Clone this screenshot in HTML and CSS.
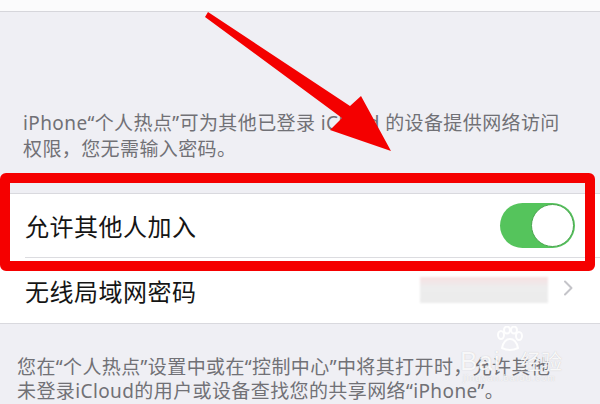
FILE: index.html
```html
<!DOCTYPE html>
<html lang="zh-CN">
<head>
  <meta charset="UTF-8" />
  <meta name="viewport" content="width=device-width, initial-scale=1.0">
  <title>个人热点</title>
  <link rel="stylesheet" href="styles.css">
</head>
<body>
  <div class="screen">
    <div class="top-bar"></div>

    <p class="note top-note">iPhone“个人热点”可为其他已登录 iCloud 的设备提供网络访问<br>权限，您无需输入密码。</p>

    <div class="group">
      <div class="cell">
        <span class="cell-label">允许其他人加入</span>
        <span class="switch on"><span class="knob"></span></span>
      </div>
      <div class="cell">
        <span class="cell-label">无线局域网密码</span>
        <span class="cell-value">
          <span class="blurred"></span>
          <svg class="chevron" width="10" height="16" viewBox="0 0 10 16">
            <path d="M2 1.5 L8.5 8 L2 14.5" fill="none" stroke="#c4c4c9" stroke-width="2" stroke-linecap="round" stroke-linejoin="round"/>
          </svg>
        </span>
      </div>
    </div>

    <p class="note bottom-note">您在“个人热点”设置中或在“控制中心”中将其打开时，允许其他<br>未登录iCloud的用户或设备查找您的共享网络“iPhone”。</p>

    <!-- annotations drawn over the screenshot -->
    <div class="highlight-box"></div>
    <svg class="arrow" width="600" height="404" viewBox="0 0 600 404">
      <polygon points="208,12 350,106 361,96 391,151 330,130 342,118 205,17" fill="#f40000"/>
    </svg>
    <div class="watermark">
      <svg class="wm-paw" width="30" height="26" viewBox="0 0 30 26">
        <g fill="none" stroke="rgba(255,255,255,0.9)" stroke-width="2">
          <ellipse cx="7" cy="9" rx="3" ry="4"/>
          <ellipse cx="13" cy="4" rx="3" ry="3.5"/>
          <ellipse cx="20" cy="4" rx="3" ry="3.5"/>
          <ellipse cx="25" cy="10" rx="3" ry="4"/>
          <path d="M8 22 Q10 13 16 13 Q22 13 24 22 Q16 26 8 22 Z"/>
        </g>
      </svg>
      <span class="wm-bai">Bai</span><span class="wm-jy">经验</span>
      <span class="wm-url">jingyan.baidu.com</span>
    </div>
  </div>
</body>
</html>
```

FILE: styles.css
```css
body {
  margin: 0;
  padding: 0;
  font-family: "Noto Sans", "Noto Sans CJK SC", sans-serif;
  background-color: #efeff4;
}

.screen {
  position: relative;
  width: 600px;
  height: 404px;
  overflow: hidden;
  background-color: #efeff4;
}

.top-bar {
  height: 11px;
  background-color: #fbfbfc;
  border-bottom: 1px solid #d6d6db;
}

.note {
  margin: 0;
  font-size: 19px;
  color: #717176;
  white-space: nowrap;
  letter-spacing: 0.4px;
}

.top-note {
  padding: 98px 23px 31px;
  line-height: 26px;
}

.bottom-note {
  padding: 31px 17px 0;
  line-height: 24px;
}

.group {
  background-color: #fff;
  border-top: 1px solid #d9d9de;
  border-bottom: 1px solid #d9d9de;
}

.cell {
  display: flex;
  align-items: center;
  justify-content: space-between;
  height: 63px;
  margin-left: 25px;
  padding-right: 25px;
  border-bottom: 1px solid #dcdce0;
}

.cell:last-child {
  height: 65px;
  border-bottom: none;
}

.cell-label {
  font-size: 24px;
  color: #151515;
  letter-spacing: 0.5px;
}

.switch {
  position: relative;
  width: 75px;
  height: 45px;
  border-radius: 23px;
  background-color: #55c45c;
}

.switch .knob {
  position: absolute;
  top: 1px;
  right: 1px;
  width: 41px;
  height: 41px;
  border-radius: 50%;
  background-color: #fff;
  border: 1px solid #4aa54f;
}

.cell-value {
  display: flex;
  align-items: center;
  gap: 15px;
  margin-top: -2px;
}

.blurred {
  width: 128px;
  height: 26px;
  background: linear-gradient(180deg, #f6e1e3 0%, #ededed 40%, #ececec 100%);
  filter: blur(1px);
}

.chevron {
  margin-right: 2px;
  margin-top: -4px;
}

.highlight-box {
  position: absolute;
  left: 0;
  top: 173px;
  width: 575px;
  height: 78px;
  border: 10px solid #f50000;
  border-radius: 6px;
}

.arrow {
  position: absolute;
  left: 0;
  top: 0;
}

.watermark {
  position: absolute;
  left: 460px;
  top: 326px;
  width: 120px;
  height: 60px;
  color: rgba(255, 255, 255, 0.88);
  text-shadow: 0 0 1px rgba(150, 150, 150, 0.5);
}

.wm-paw {
  position: absolute;
  left: 34px;
  top: 0;
}

.wm-bai {
  position: absolute;
  left: 0;
  top: 20px;
  font-family: "Liberation Sans", sans-serif;
  font-size: 26px;
  line-height: 30px;
  letter-spacing: 1px;
}

.wm-jy {
  position: absolute;
  left: 60px;
  top: 22px;
  font-size: 21px;
  line-height: 26px;
}

.wm-url {
  position: absolute;
  left: 3px;
  top: 47px;
  font-family: "Liberation Sans", sans-serif;
  font-size: 9px;
  line-height: 10px;
  letter-spacing: 1.2px;
}
```
